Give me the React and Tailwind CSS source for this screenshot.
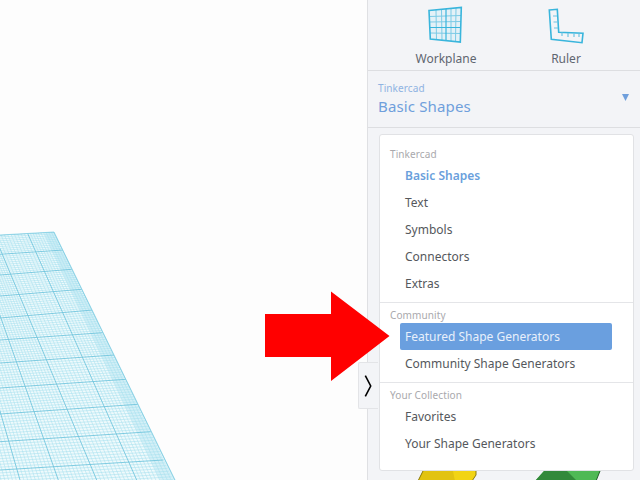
import React from 'react';

const FONT = "font-['Noto_Sans',sans-serif]";

// right edge of the workplane, where each major cross line starts: [x, y, y at x=0]
const crossLines = [
  [54, 232, 235],
  [63.3, 250, 254.3],
  [71.7, 269.3, 275],
  [81.7, 289.3, 296],
  [92.7, 310, 318],
  [102.7, 332.7, 340],
  [114.3, 355, 363],
  [126, 379.3, 388],
  [137.7, 404.3, 414],
  [150.7, 431.7, 441.7],
  [163.3, 460, 470],
  [177, 488, 499],
];

// long lines of the workplane: [x at y=232, x at y=480]
const longLines = [
  [54, 175],
  [27, 136.7],
  [-7, 96.7],
  [-29.6, 58.3],
  [-52, 20],
  [-84, -18],
];

const lerp = (a, b, t) => a + (b - a) * t;

function Workplane() {
  const minor = [];
  const major = [];

  crossLines.forEach((line, i) => {
    const next = crossLines[i + 1];
    major.push(`M${line[0]} ${line[1]}L0 ${line[2]}`);
    if (!next) return;
    for (let k = 1; k < 10; k++) {
      const t = k / 10;
      minor.push(`M${lerp(line[0], next[0], t)} ${lerp(line[1], next[1], t)}L0 ${lerp(line[2], next[2], t)}`);
    }
  });

  longLines.forEach((line, i) => {
    const next = longLines[i + 1];
    major.push(`M${line[0]} 232L${line[1]} 480`);
    if (!next) return;
    for (let k = 1; k < 10; k++) {
      const t = k / 10;
      minor.push(`M${lerp(line[0], next[0], t)} 232L${lerp(line[1], next[1], t)} 480`);
    }
  });

  return (
    <svg className="block h-full w-full" viewBox="0 0 367 480">
      <defs>
        <clipPath id="plane">
          <polygon points="0,235 54,232 175,480 0,480" />
        </clipPath>
      </defs>
      <g clipPath="url(#plane)">
        <rect x="0" y="230" width="180" height="250" fill="#effafc" />
        <polygon points="54,232 175,480 160,480 44,233" fill="#bfe8f3" fillOpacity="0.55" />
        <path d={minor.join('')} stroke="#a6e0ef" strokeWidth="0.55" fill="none" />
        <path d={major.join('')} stroke="#6cc3dc" strokeWidth="0.85" fill="none" />
      </g>
      <path d="M0 235L54 232L175 480" stroke="#86d0e4" strokeWidth="0.8" fill="none" />
    </svg>
  );
}

function WorkplaneIcon() {
  return (
    <svg width="36" height="38" viewBox="0 0 36 38" className="block">
      <polygon points="1,4.5 33.3,1.5 32.3,36 2.3,33" fill="#d8eef7" fillOpacity="0.6" />
      <path d="M8 4L8.5 34M13.5 3.5L14 34.5M23 2.5L23 35M28 2L27.5 35.5M1.5 10.5L33 9.5M1.5 16L33 15.5M2 27L32.5 27.5" stroke="#7ccbe6" strokeWidth="1" fill="none" />
      <path d="M18 3L18 35M1.5 21.5L33 21.5" stroke="#39b5dc" strokeWidth="1.2" fill="none" />
      <polygon points="1,4.5 33.3,1.5 32.3,36 2.3,33" stroke="#39b5dc" strokeWidth="1.6" fill="none" />
    </svg>
  );
}

function RulerIcon() {
  return (
    <svg width="40" height="38" viewBox="0 0 40 38" className="block">
      <path d="M3.3 4L11.3 3.3L12.7 26.3L37 27.3L36 36.7L5.3 33.3Z" stroke="#39b5dc" strokeWidth="1.6" fill="none" />
      <path d="M7 10L11 10M7.5 16L11.5 16M8 22L12 22M16 26.5L16 30M22 27L22 31M28 27.5L28 31M33 27.5L33 31" stroke="#6fc4e3" strokeWidth="1.2" fill="none" />
    </svg>
  );
}

function MenuLabel({ children }) {
  return <div className="h-[15px] pl-[10px] text-[10px] leading-[15px] tracking-[0.1px] text-[#a9a9ad]">{children}</div>;
}

function MenuItem({ children, bold, active }) {
  let tone = 'text-[#55585c] mr-[20px]';
  if (bold) tone = 'text-[#6a9fdc] font-semibold mr-[20px]';
  if (active) tone = 'bg-[#6a9fdf] text-[#e8f0fb] rounded-[2px] mr-[21px]';
  return (
    <div className={`ml-[20px] h-[27px] pl-[5px] text-[12px] leading-[27px] ${tone}`}>
      {children}
    </div>
  );
}

export default function App() {
  return (
    <div className={`relative flex h-[480px] w-[640px] overflow-hidden bg-[#fdfdfd] ${FONT}`}>
      <div className="flex-1">
        <Workplane />
      </div>

      <div className="flex w-[273px] flex-col border-l border-[#dfe0e3] bg-[#f3f4f7]">
        <div className="flex h-[71px] shrink-0 border-b border-[#dddee1]">
          <div className="flex w-[156px] flex-col items-center pt-[6px]">
            <WorkplaneIcon />
            <span className="mt-[7px] text-[12px] leading-[16px] text-[#5f6670]">Workplane</span>
          </div>
          <div className="flex w-[84px] flex-col items-center pt-[6px]">
            <RulerIcon />
            <span className="mt-[7px] text-[12px] leading-[16px] text-[#5f6670]">Ruler</span>
          </div>
        </div>

        <div className="flex h-[57px] shrink-0 items-center justify-between border-b border-[#dddee1] pb-[1px] pl-[10px] pr-[11px]">
          <div>
            <div className="text-[10px] leading-[14px] tracking-[0.1px] text-[#8fb3e2]">Tinkercad</div>
            <div className="text-[15px] leading-[22px] tracking-[0.15px] text-[#6f9fdc]">Basic Shapes</div>
          </div>
          <svg width="7" height="7" viewBox="0 0 7 7" className="mb-[2px]">
            <polygon points="0,0 7,0 3.5,7" fill="#6f9fdc" />
          </svg>
        </div>

        <div className="ml-[11px] mr-[6px] mt-[6px] h-[337px] shrink-0 rounded-[3px] border border-[#e1e2e5] bg-white">
          <div className="pt-[12px]">
            <MenuLabel>Tinkercad</MenuLabel>
            <MenuItem bold>Basic Shapes</MenuItem>
            <MenuItem>Text</MenuItem>
            <MenuItem>Symbols</MenuItem>
            <MenuItem>Connectors</MenuItem>
            <MenuItem>Extras</MenuItem>
          </div>
          <div className="mt-[5px] border-t border-[#e4e5e8] pt-[5px]">
            <MenuLabel>Community</MenuLabel>
            <MenuItem active>Featured Shape Generators</MenuItem>
            <MenuItem>Community Shape Generators</MenuItem>
          </div>
          <div className="mt-[5px] border-t border-[#e4e5e8] pt-[5px]">
            <MenuLabel>Your Collection</MenuLabel>
            <MenuItem>Favorites</MenuItem>
            <MenuItem>Your Shape Generators</MenuItem>
          </div>
        </div>

        <svg width="272" height="10" viewBox="367 470 272 10" className="block shrink-0">
          <polygon points="422,470 475,470 475,474 471,480 417,480" fill="#f2d414" />
          <polygon points="422,470 452,470 454,480 417,480" fill="#e2c311" />
          <path d="M422 470L417 480M475 470L475 474L471 480" stroke="#8a7a10" strokeWidth="1" fill="none" />
          <polygon points="543,470 599,470 595,480 534,480" fill="#4fb955" />
          <polygon points="543,470 566,470 576,480 534,480" fill="#32893a" />
          <path d="M599 470L595 480" stroke="#23602a" strokeWidth="1" fill="none" />
        </svg>
      </div>

      {/* collapse tab on the panel edge */}
      <div className="absolute left-[358px] top-[362px] flex h-[47px] w-[20px] items-center rounded-l-[2px] border border-r-0 border-[#e3e4e7] bg-[#f3f4f7] pl-[5px]">
        <svg width="8" height="22" viewBox="0 0 8 22">
          <path d="M1.3 0.7L6.7 11L1.3 21.3" stroke="#000" strokeWidth="1.6" fill="none" />
        </svg>
      </div>

      {/* red callout arrow */}
      <svg className="absolute left-[265px] top-[291px]" width="125" height="90" viewBox="265 291 125 90">
        <polygon points="265,314 331,314 331,291.5 389.5,336 331,381 331,357 265,357" fill="#ff0000" />
      </svg>
    </div>
  );
}
